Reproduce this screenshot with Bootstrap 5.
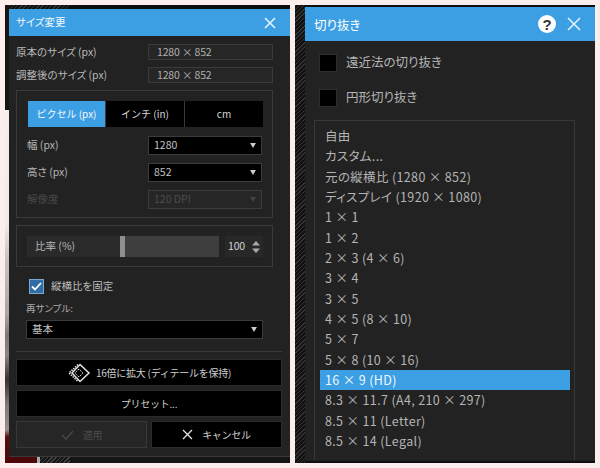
<!DOCTYPE html>
<html lang="ja">
<head>
<meta charset="utf-8">
<title>サイズ変更 / 切り抜き</title>
<link href="https://cdn.jsdelivr.net/npm/bootstrap@5.3.0/dist/css/bootstrap.min.css" rel="stylesheet">
<style>
html,body{margin:0;height:468px;overflow:hidden;background:#fdeeee}
body{font-family:"Noto Sans CJK JP","Liberation Sans",sans-serif;font-size:10.5px;line-height:1.2;color:#b8b8b8;font-feature-settings:"palt"}
.stage{width:600px;height:468px;padding:5px;gap:5px}
.win-a{width:285px;height:458px;background:linear-gradient(#151515 0,#151515 105px,#f4eeee 105px,#efe9e9 220px,#c9c6c4 250px,#a8a5a3 310px,#7b7775 330px,#8a8686 350px,#3a3030 375px,#807a78 400px,#9a8f8c 425px,#5a0c0c 432px,#4c0808 458px)}
.top-a{height:4px;margin-left:4px;background:repeating-linear-gradient(135deg,#333 0 1px,#111 1px 3px) 0 0/60px 100% no-repeat,#0d0d0d}
.panel-a{margin-left:4px;height:448px;background:#222;border-bottom:1px solid #3a3a3a}
.bot-a{height:6px;background:linear-gradient(90deg,#4c0808 0 32px,#aaa 32px 35px,transparent 35px),repeating-linear-gradient(135deg,#444 0 1px,#151515 1px 3px) 0 0/65px 100% no-repeat,#151515}
.tbar{background:#3d9fe3;color:#fff}
.tbar-a{height:27px;padding:0 14px 0 7px;font-size:10.5px;color:#f4f8fc}
.bd-a{padding:8px 8px 0 7px}
.fld{width:257px;height:16px;margin-bottom:7px}
.val{width:125px;height:16px;border:1px solid #3a3a3a;background:#262626;padding-left:8px;color:#b0b0b0;letter-spacing:-.15px}
.grp{width:257px;border:1px solid #3a3a3a}
.g1{height:128px;padding:10px 10px 0 11px;margin-bottom:7px}
.tabs{height:26px;background:#000;margin-bottom:9px}
.tabs.btn-group>.btn.btn:nth-child(n){font-size:10px;padding:0;margin:0;border:0;border-radius:0;background:#000;color:#d6d6d6;height:26px;line-height:26px;flex:0 0 79px}
.tabs.btn-group>.btn.act.act:nth-child(n){background:#3d9fe3;color:#f4f8fc;flex-basis:77px}
.tabs.btn-group>.btn.btn+.btn:nth-child(n){border-left:1px solid #3a3a3a}
.frow{height:19px;margin-bottom:8px;margin-left:-1px}
.frow label{flex:0 0 121px;margin:0;font-size:10.5px;color:#b8b8b8}
select.sel{width:114px;height:19px;background-color:#000;border:1px solid #3c3c3c;border-radius:0;color:#c4c4c4;font-size:10.5px;line-height:1;padding:0 0 0 5px;background-image:url("data:image/svg+xml,%3csvg xmlns='http://www.w3.org/2000/svg' viewBox='0 0 7 6'%3e%3cpath fill='%23ccc' d='M0 0h7L3.5 6z'/%3e%3c/svg%3e");background-size:6px 5px;background-position:right 5px center;background-repeat:no-repeat;box-shadow:none;font-family:inherit}
select.sel:disabled{background-color:#262626;color:#4c4c4c;opacity:1;background-image:url("data:image/svg+xml,%3csvg xmlns='http://www.w3.org/2000/svg' viewBox='0 0 7 6'%3e%3cpath fill='%23444' d='M0 0h7L3.5 6z'/%3e%3c/svg%3e")}
.frow.off label{color:#484848}
.g2{height:42px;padding:10px 9px 0 10px}
.slab{width:93px;height:21px;background:#2a2a2a;padding-left:8px}
.strk{width:99px;height:21px;background:#3e3e3e}
.thumb{width:5px;height:21px;background:#8f8f8f}
.spin{width:38px;height:21px;margin-left:6px;background:#282828;padding:0 3px;color:#d4d4d4;letter-spacing:-.2px}
.cklin{height:14px;margin:12px 0 10px 13px;gap:7px;color:#bcbcbc}
.ckon{width:15px;height:15px;background:#2f6ea6;border:1px solid #7fa9cc}
.rs{margin-left:10px;height:11px;margin-bottom:6px;color:#aaa;line-height:11px;font-size:9.500px}
select.wide{width:237px;margin-left:10px;display:block}
.rule{border-top:1px solid #3a3a3a;margin:12px 0 7px;width:266px}
.bbtn{width:266px;height:27px;background:#000;border:1px solid #2c2c2c;border-radius:0;color:#cfcfcf;font-size:10px;letter-spacing:-.25px;padding:0;margin-bottom:4px;gap:5px}
.bbtn:disabled{background:#262626;border-color:#383838;color:#4c4c4c;opacity:1}
.half{width:131px;margin:0;gap:9px}
.duo{gap:4px}
.win-b{width:300px;height:458px;background:#0f0f0f;padding-left:10px;padding-top:2px;padding-bottom:2px;background-image:repeating-linear-gradient(135deg,#333 0 1px,#111 1px 3px);background-size:10px 100%;background-repeat:no-repeat}
.tbar-b{height:34px;padding:0 14px 0 9px;font-size:12.5px}
.tbar-b .hlp{margin-right:11px}
.panel-b{height:420px;background:#222;padding:13px 20px 0 9px}
.blk{width:18px;height:18px;background:#000;border:1px solid #2e2e2e;flex:none}
.ckb{height:18px;margin:0 0 17px 5px;gap:9px;font-size:12.5px;line-height:16px;color:#b4b4b4}
.ckb span+span{margin-top:-2px}
.lst{border:1px solid #383838;border-bottom:0;margin-top:-4px;padding:5px 4px 0 5px;height:340px;border-radius:0;display:block}
.lst .list-group-item{background:transparent;border:0;border-radius:0;color:#b4b4b4;font-size:12.5px;letter-spacing:.35px;line-height:20.35px;height:20.35px;padding:0 0 0 5px;white-space:nowrap}
.lst .list-group-item.active{background:#3d9fe3;color:#f2f8fd;margin:0}
</style>
</head>
<body>
<div class="stage d-flex">
  <div class="win-a">
    <div class="top-a"></div>
    <div class="panel-a">
      <div class="tbar tbar-a d-flex align-items-center justify-content-between">
        <span>サイズ変更</span>
        <svg width="12" height="12" viewBox="0 0 12 12"><path d="M1 1l10 10M11 1L1 11" stroke="#eaf4fc" stroke-width="1.5" fill="none"/></svg>
      </div>
      <div class="bd-a">
        <div class="fld d-flex align-items-center justify-content-between"><span>原本のサイズ (px)</span><div class="val d-flex align-items-center">1280 × 852</div></div>
        <div class="fld d-flex align-items-center justify-content-between"><span>調整後のサイズ (px)</span><div class="val d-flex align-items-center">1280 × 852</div></div>
        <div class="grp g1">
          <div class="tabs btn-group d-flex" role="group">
            <button type="button" class="btn act">ピクセル (px)</button>
            <button type="button" class="btn">インチ (in)</button>
            <button type="button" class="btn">cm</button>
          </div>
          <div class="frow d-flex align-items-center"><label>幅 (px)</label><select class="form-select sel"><option>1280</option></select></div>
          <div class="frow d-flex align-items-center"><label>高さ (px)</label><select class="form-select sel"><option>852</option></select></div>
          <div class="frow off d-flex align-items-center"><label>解像度</label><select class="form-select sel" disabled><option>120 DPI</option></select></div>
        </div>
        <div class="grp g2 d-flex">
          <div class="slab d-flex align-items-center">比率 (%)</div>
          <div class="strk"><div class="thumb"></div></div>
          <div class="spin d-flex align-items-center justify-content-between"><span>100</span>
            <svg width="8" height="14" viewBox="0 0 8 14"><path fill="#aaa" d="M0 5.500L4 1l4 4.500zM0 8.500h8L4 13z"/></svg>
          </div>
        </div>
        <div class="cklin d-flex align-items-center">
          <span class="ckon d-flex align-items-center justify-content-center"><svg width="11" height="9" viewBox="0 0 11 9"><path d="M1 4.500l3 3L10 1" stroke="#fff" stroke-width="1.800" fill="none"/></svg></span>
          <span>縦横比を固定</span>
        </div>
        <div class="rs">再サンプル:</div>
        <select class="form-select sel wide"><option>基本</option></select>
        <div class="rule"></div>
        <button type="button" class="btn bbtn d-flex align-items-center justify-content-center">
          <svg width="24" height="20" viewBox="0 0 24 20"><g fill="none" stroke="#e4e4e4"><path stroke-dasharray="1.500 1" stroke-width="1.500" d="M11 1.500L2 10l9 8.500"/><path stroke-width="1.500" d="M13 1.500L22 10l-9 8.500L5 10z"/><path stroke-dasharray="1.500 1" d="M12 6l-4 4 4 4 4-4z"/></g></svg>
          <span>16倍に拡大 (ディテールを保持)</span>
        </button>
        <button type="button" class="btn bbtn d-flex align-items-center justify-content-center">プリセット...</button>
        <div class="d-flex duo">
          <button type="button" class="btn bbtn half d-flex align-items-center justify-content-center" disabled>
            <svg width="13" height="10" viewBox="0 0 13 10"><path d="M1 5l4 4 7-8" stroke="#4a4a4a" stroke-width="1.300" fill="none"/></svg><span>適用</span>
          </button>
          <button type="button" class="btn bbtn half d-flex align-items-center justify-content-center">
            <svg width="11" height="11" viewBox="0 0 11 11"><path d="M1 1l9 9M10 1l-9 9" stroke="#e6e6e6" stroke-width="1.300" fill="none"/></svg><span>キャンセル</span>
          </button>
        </div>
      </div>
    </div>
    <div class="bot-a"></div>
  </div>
  <div class="win-b">
    <div class="tbar tbar-b d-flex align-items-center">
      <span class="me-auto">切り抜き</span>
      <svg width="18" height="18" viewBox="0 0 18 18" class="hlp"><circle cx="9" cy="9" r="9" fill="#fff"/><text x="9" y="14.500" text-anchor="middle" font-family="Liberation Sans" font-weight="700" font-size="15" fill="#333">?</text></svg>
      <svg width="14" height="14" viewBox="0 0 14 14"><path d="M1 1l12 12M13 1L1 13" stroke="#eaf4fc" stroke-width="1.500" fill="none"/></svg>
    </div>
    <div class="panel-b">
      <div class="ckb d-flex align-items-center"><span class="blk"></span><span>遠近法の切り抜き</span></div>
      <div class="ckb d-flex align-items-center"><span class="blk"></span><span>円形切り抜き</span></div>
      <div class="list-group lst">
        <div class="list-group-item">自由</div>
        <div class="list-group-item">カスタム...</div>
        <div class="list-group-item">元の縦横比 (1280 × 852)</div>
        <div class="list-group-item">ディスプレイ (1920 × 1080)</div>
        <div class="list-group-item">1 × 1</div>
        <div class="list-group-item">1 × 2</div>
        <div class="list-group-item">2 × 3 (4 × 6)</div>
        <div class="list-group-item">3 × 4</div>
        <div class="list-group-item">3 × 5</div>
        <div class="list-group-item">4 × 5 (8 × 10)</div>
        <div class="list-group-item">5 × 7</div>
        <div class="list-group-item">5 × 8 (10 × 16)</div>
        <div class="list-group-item active">16 × 9 (HD)</div>
        <div class="list-group-item">8.3 × 11.7 (A4, 210 × 297)</div>
        <div class="list-group-item">8.5 × 11 (Letter)</div>
        <div class="list-group-item">8.5 × 14 (Legal)</div>
      </div>
    </div>
  </div>
</div>
<script src="https://cdn.jsdelivr.net/npm/bootstrap@5.3.0/dist/js/bootstrap.bundle.min.js"></script>
</body>
</html>
